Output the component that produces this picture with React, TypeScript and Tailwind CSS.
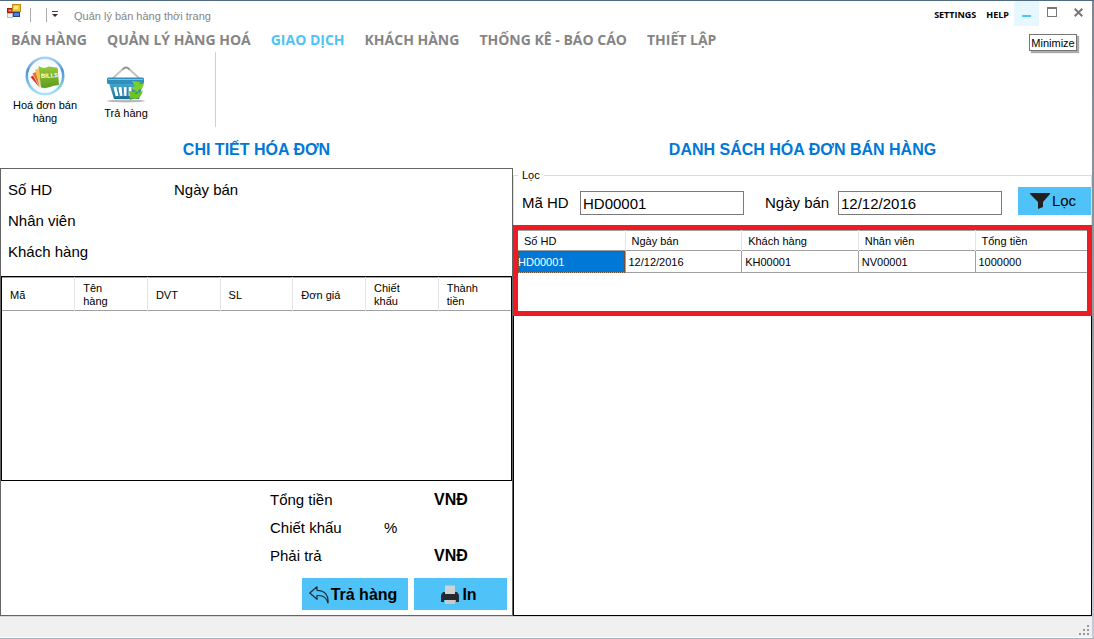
import React from "react";

const tabs = ["BÁN HÀNG", "QUẢN LÝ HÀNG HOÁ", "GIAO DỊCH", "KHÁCH HÀNG", "THỐNG KÊ - BÁO CÁO", "THIẾT LẬP"];
const detailColumns = ["Mã", "Tên hàng", "DVT", "SL", "Đơn giá", "Chiết khấu", "Thành tiền"];
const listColumns = [
  { name: "Số HD", width: "w-[107px]" },
  { name: "Ngày bán", width: "" },
  { name: "Khách hàng", width: "" },
  { name: "Nhân viên", width: "" },
  { name: "Tổng tiền", width: "w-[112px]" },
];
const invoice = ["HD00001", "12/12/2016", "KH00001", "NV00001", "1000000"];

function AppIcon() {
  return (
    <svg width="14" height="14" viewBox="0 0 14 14" aria-hidden="true">
      <rect x="0.5" y="4.500" width="5" height="4" fill="#d8452a" stroke="#9c1f10" />
      <rect x="2" y="6" width="2" height="1" fill="#f5a080" />
      <rect x="5.500" y="0.500" width="8" height="7" fill="#fbc530" stroke="#b98a10" />
      <rect x="7" y="2" width="4" height="3" fill="#ffe888" />
      <rect x="0.500" y="9.500" width="5" height="4" fill="#eceff4" stroke="#b4bac6" />
      <rect x="6.500" y="8.500" width="6" height="4" fill="#4a7ee0" stroke="#1c469c" />
    </svg>
  );
}

function BillsIcon() {
  return (
    <svg width="40" height="40" viewBox="0 0 40 40" className="shrink-0" aria-hidden="true">
      <defs>
        <linearGradient id="ring" x1="0" y1="0" x2="0" y2="1">
          <stop offset="0" stopColor="#a9d3f2" />
          <stop offset="0.35" stopColor="#4d94d2" />
          <stop offset="1" stopColor="#a5e4fb" />
        </linearGradient>
        <linearGradient id="bill" x1="0" y1="0" x2="0" y2="1">
          <stop offset="0" stopColor="#95c93b" />
          <stop offset="1" stopColor="#5d9c1b" />
        </linearGradient>
      </defs>
      <circle cx="20" cy="20" r="18.2" fill="#f7fbfe" stroke="url(#ring)" strokeWidth="2.6" />
      <path d="M5.500 21l2.500-1.500L14.500 31.500z" fill="#ce3422" />
      <path d="M7.500 17.500l3.500-1.500 4 15.500z" fill="#e9722a" />
      <path d="M10 14l3.500-2 2.500 19.500z" fill="#f6c34b" />
      <path d="M13.500 10q6 3.500 10 .5l8 1q1 0 1.200 1L34 29q-6 .5-9 2-5 1.500-9 .5z" fill="url(#bill)" />
      <text x="16" y="22" fontSize="6" fontWeight="700" fontFamily="Liberation Sans, sans-serif" fill="#fff" transform="rotate(-3 16 22)">BILLS</text>
    </svg>
  );
}

function BasketIcon() {
  return (
    <svg width="40" height="38" viewBox="0 0 40 38" className="shrink-0" aria-hidden="true">
      <defs>
        <linearGradient id="basket" x1="0" y1="0" x2="0" y2="1">
          <stop offset="0" stopColor="#45a9d3" />
          <stop offset="1" stopColor="#1c6c99" />
        </linearGradient>
      </defs>
      <ellipse cx="20" cy="36" rx="19" ry="1.5" fill="#b9b9b9" />
      <path d="M6 14L17.500 3.500q2.500-2.500 5 0L34 14" fill="none" stroke="#c3c3c3" strokeWidth="2" />
      <path d="M16.500 4.500q3.500-4 7 0" fill="none" stroke="#8d8d8d" strokeWidth="1.500" />
      <path d="M3 18h34l-4 16H8z" fill="url(#basket)" />
      <rect x="1" y="12.500" width="37" height="6.500" rx="1.500" fill="#318fbc" />
      <path d="M2 14.500h35" stroke="#78c5df" />
      <path d="M9 22l2 9M14 22l1 9M19 22v9M24 22v9" stroke="#fff" strokeWidth="3" />
      <path d="M11 23l3 8M17 22l1 9M22 22v9" stroke="#3480a8" strokeWidth="0.8" />
      <path d="M26 16l9 1-2 2q4 0 5-2 0 7-6 8l1 3-8-5 4-2z" fill="#79cf2b" />
      <path d="M37 25q-2 9-8 9l-5-1 2 2h-2l-1-9 8 1-3 2q5 0 9-4z" fill="#6cc522" />
    </svg>
  );
}

function FunnelIcon() {
  return (
    <svg width="20" height="16" viewBox="0 0 20 16" aria-hidden="true">
      <path d="M0 0h20v1l-7 8v5l-5 2V9L0 1z" fill="#231f20" />
    </svg>
  );
}

function ReplyIcon() {
  return (
    <svg width="20" height="18" viewBox="0 0 20 18" aria-hidden="true">
      <path d="M8 .8L.8 7 8 13.3V9.6c6-.7 9.5 2 11 7.4C19.800 9 15.500 4.400 8 4.300z" fill="none" stroke="#1c2b34" strokeWidth="1.2" strokeLinejoin="round" />
    </svg>
  );
}

function PrinterIcon() {
  return (
    <svg width="20" height="20" viewBox="0 0 20 20" aria-hidden="true">
      <rect x="5" y="0.500" width="10" height="9" fill="#d2d2d2" />
      <path d="M3 7h2v2h10V7h2l2 3v7h-3v-2H4v2H1v-7z" fill="#252a31" />
      <rect x="5" y="15" width="10" height="4" fill="#c9c9c9" />
    </svg>
  );
}

function TitleBar() {
  return (
    <header className="flex h-[27px] shrink-0 items-start text-[11px]">
      <div className="flex items-center gap-2 pl-[7px] pt-[3px]">
        <AppIcon />
      </div>
      <div className="ml-[9px] mt-[7px] h-[14px] w-px bg-[#ababab]" />
      <div className="ml-[15px] mt-[7px] h-[14px] w-px bg-[#ababab]" />
      <button aria-label="Customize" className="ml-[5px] mt-[10px]">
        <svg width="6" height="7" viewBox="0 0 6 7" aria-hidden="true">
          <path d="M0 .5h6" stroke="#444" />
          <path d="M0 3h6L3 6z" fill="#333" />
        </svg>
      </button>
      <h1 className="ml-4 mt-[7px] leading-4 text-[#858585]">Quản lý bán hàng thời trang</h1>
      <div className="ml-auto flex font-['Open_Sans',sans-serif] text-[9px] font-bold leading-4">
        <button className="mr-[10px] mt-[6px] self-start">SETTINGS</button>
        <button className="mr-[5px] mt-[6px] self-start">HELP</button>
        <div className="relative">
          <button aria-label="Minimize" aria-describedby="minimize-tip" className="flex h-[25px] w-[25px] items-center justify-center bg-[#e6f7ff] pt-[5px]">
            <span className="h-[2px] w-[9px] bg-[#4fc3f7]" />
          </button>
          <div id="minimize-tip" role="tooltip" className="absolute left-[15px] top-[33px] flex h-[17px] w-[48px] items-center justify-center border border-[#767676] bg-white font-['Liberation_Sans',sans-serif] text-[11px] font-normal shadow-[2px_2px_1px_#aaa]">Minimize</div>
        </div>
        <button aria-label="Maximize" className="ml-2 mt-[6px] self-start">
          <svg width="10" height="10" viewBox="0 0 10 10" aria-hidden="true">
            <rect x="0.500" y="0.500" width="9" height="9" fill="none" stroke="#777" />
            <path d="M0 1h10" stroke="#777" strokeWidth="2" />
          </svg>
        </button>
        <button aria-label="Close" className="ml-[17px] mr-[9px] mt-[7px] self-start">
          <svg width="9" height="9" viewBox="0 0 9 9" aria-hidden="true">
            <path d="M.7.7l7.600 7.600M8.300.7L.7 8.300" stroke="#777" strokeWidth="2" />
          </svg>
        </button>
      </div>
    </header>
  );
}

function Ribbon() {
  return (
    <>
      <nav className="flex h-6 shrink-0 items-center gap-5 pl-[11px] font-['Open_Sans',sans-serif] text-[14px] font-bold leading-6">
        {tabs.map((tab) => (
          <a key={tab} href="#" className={tab === "GIAO DỊCH" ? "whitespace-nowrap text-[#4fc3f7]" : "whitespace-nowrap text-[#858585]"}>{tab}</a>
        ))}
      </nav>
      <div className="flex h-[75px] shrink-0 text-[11px] leading-[13px]">
        <button className="ml-2 flex h-[72px] w-[74px] flex-col items-center gap-[3px] overflow-hidden pt-1">
          <BillsIcon />
          <span>Hoá đơn bán hàng</span>
        </button>
        <button className="ml-[7px] flex h-[72px] w-[74px] flex-col items-center gap-1 pt-[13px]">
          <BasketIcon />
          <span>Trả hàng</span>
        </button>
        <div className="ml-[52px] w-px bg-[#d0d0d0]" />
      </div>
    </>
  );
}

function InvoiceDetail() {
  return (
    <section className="flex min-w-0 flex-col">
      <h2 className="flex h-[41px] items-center justify-center pt-1 text-[16px] font-bold text-[#0078d7]">CHI TIẾT HÓA ĐƠN</h2>
      <div className="flex flex-1 flex-col border border-[#646464]">
        <dl className="h-[107px] pl-[7px] pt-[5px] leading-[31px]">
          <div className="flex">
            <dt className="w-[166px]">Số HD</dt>
            <dt>Ngày bán</dt>
          </div>
          <dt>Nhân viên</dt>
          <dt>Khách hàng</dt>
        </dl>
        <div className="flex-1 border border-black">
          <table className="w-full table-fixed border-collapse border-t border-[#a0a0a0] text-[11px] leading-[13px]">
            <thead>
              <tr className="h-[33px] border-b border-[#a0a0a0]">
                {detailColumns.map((c) => (
                  <th key={c} className="border-r border-[#e5e5e5] pl-2 pr-5 pt-[2px] text-left font-normal last:border-r-0">{c}</th>
                ))}
              </tr>
            </thead>
          </table>
        </div>
        <div className="flex h-[134px] flex-col items-end pr-[5px] pt-[5px]">
          <div className="grid w-[237px] grid-cols-[114px_50px_1fr] leading-[28px]">
            <span>Tổng tiền</span><span /><b className="text-[16px] leading-[28px]">VNĐ</b>
            <span>Chiết khấu</span><span>%</span><span />
            <span>Phải trả</span><span /><b className="text-[16px] leading-[28px]">VNĐ</b>
          </div>
          <div className="mt-2 flex gap-[6px] text-[16px] font-bold">
            <button className="flex h-8 w-[106px] items-center justify-center gap-[2px] bg-[#4fc3f7] pr-1 pt-[2px]"><ReplyIcon />Trả hàng</button>
            <button className="flex h-8 w-[93px] items-center justify-center gap-[2px] bg-[#4fc3f7] pr-1 pt-[2px]"><PrinterIcon />In</button>
          </div>
        </div>
      </div>
    </section>
  );
}

function InvoiceList() {
  return (
    <section className="flex min-w-0 flex-col">
      <h2 className="flex h-[41px] items-center justify-center pt-1 text-[16px] font-bold text-[#0078d7]">DANH SÁCH HÓA ĐƠN BÁN HÀNG</h2>
      <fieldset className="h-[57px] min-w-0 border border-b-0 border-[#dcdcdc] pl-2">
        <legend className="-ml-1 px-1 text-[11px] leading-[14px]">Lọc</legend>
        <div className="flex items-center pt-[5px]">
          <label htmlFor="code" className="w-[58px] shrink-0 pt-[5px]">Mã HD</label>
          <input id="code" defaultValue="HD00001" className="mt-1 h-6 w-[164px] min-w-0 flex-1 border border-[#7a7a7a] px-[2px]" />
          <label htmlFor="date" className="ml-[21px] w-[73px] shrink-0 pt-[5px]">Ngày bán</label>
          <input id="date" defaultValue="12/12/2016" className="mt-1 h-6 w-[164px] min-w-0 flex-1 border border-[#7a7a7a] px-[2px]" />
          <button className="ml-4 flex h-7 w-[73px] shrink-0 items-center justify-center gap-[2px] bg-[#4fc3f7] pr-[3px]"><FunnelIcon />Lọc</button>
        </div>
      </fieldset>
      <div className="h-[91px] shrink-0 border-[5px] border-[#ed1c24]">
        <table className="w-full table-fixed border-collapse border-t border-[#a0a0a0] text-[11px] leading-[13px]">
          <thead>
            <tr className="h-5 border-b border-[#a0a0a0]">
              {listColumns.map((c) => (
                <th key={c.name} className={`${c.width} border-r border-[#e5e5e5] pl-[6px] pt-[2px] text-left font-normal last:border-r-0`}>{c.name}</th>
              ))}
            </tr>
          </thead>
          <tbody>
            <tr className="h-[22px] border-b border-[#a0a0a0]">
              {invoice.map((v, i) => (
                <td key={v} className={i === 0 ? "border-r border-[#a0a0a0] bg-[#0078d7] pt-[2px] text-white outline-1 -outline-offset-1 outline-dotted outline-[#6b4a2c]" : "border-r border-[#a0a0a0] pl-[3px] pt-[2px] last:border-r-0"}>{v}</td>
              ))}
            </tr>
          </tbody>
        </table>
      </div>
      <div className="flex-1 border-b border-l border-r border-black" />
    </section>
  );
}

export default function App() {
  return (
    <div className="flex min-h-screen border-b border-t border-b-[#a9b2ba] border-t-[#4d6a80] bg-white font-['Liberation_Sans',Arial,sans-serif] text-[15px] text-black">
      <div className="flex min-w-0 flex-1 flex-col">
        <TitleBar />
        <Ribbon />
        <main className="grid flex-1 grid-cols-[513fr_579fr]">
          <InvoiceDetail />
          <InvoiceList />
        </main>
        <footer className="flex h-[22px] shrink-0 items-end justify-end border-b border-t border-b-white border-t-[#d7d7d7] bg-[#f0f0f0] pb-[2px] pr-[3px]">
          <svg width="10" height="10" viewBox="0 0 10 10" fill="#999" aria-hidden="true">
            <path d="M8 0h2v2H8zM4 4h2v2H4zM8 4h2v2H8zM0 8h2v2H0zM4 8h2v2H4zM8 8h2v2H8z" />
          </svg>
        </footer>
      </div>
      <div className="w-[2px] shrink-0 bg-linear-to-b from-[#7d8796] via-[#8f9ba0] to-[#c5ccda]" />
    </div>
  );
}
